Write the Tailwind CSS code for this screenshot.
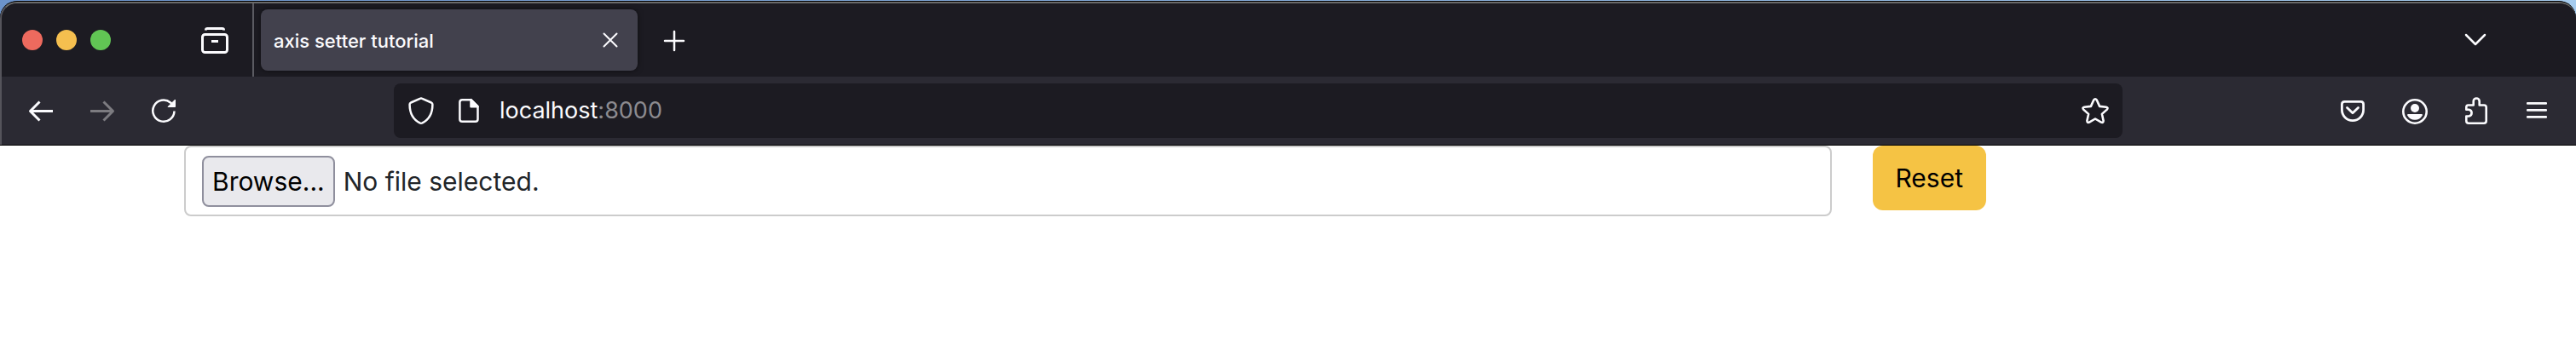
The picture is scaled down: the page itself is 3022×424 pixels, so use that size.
<!DOCTYPE html>
<html lang="en">
<head>
<meta charset="utf-8">
<title>axis setter tutorial</title>
<script src="https://cdn.jsdelivr.net/npm/@tailwindcss/browser@4"></script>
</head>
<body class="bg-white font-['Inter','Liberation_Sans',sans-serif]">
<header class="bg-linear-to-r from-[#6c93cb] to-[#a5cbee] pt-px">
  <div class="rounded-t-[20px] border-t border-b border-black bg-black">
    <div class="overflow-hidden rounded-t-[20px] border-t-2 border-l-2 border-t-[#6a6a6a] border-l-[#55545b] bg-[#2b2a33] text-[#fbfbfe]">
      <!-- Tab strip -->
      <div class="flex h-[86px] items-center bg-[#1c1b22]">
        <div class="flex gap-4 pl-6">
          <button aria-label="Close window" class="size-6 rounded-full bg-[#ed6a5e]"></button>
          <button aria-label="Minimize window" class="size-6 rounded-full bg-[#f5bf4f]"></button>
          <button aria-label="Zoom window" class="size-6 rounded-full bg-[#61c554]"></button>
        </div>
        <button aria-label="Firefox View" class="ml-[106px]">
          <svg class="size-8" viewBox="0 0 32 32" fill="none" stroke="currentColor" stroke-width="3"><path d="M5.500 4.500V4q0-1.500 2-1.500h17q2 0 2 1.500v.5"/><rect x="1.500" y="9.500" width="29" height="21" rx="3"/><path d="M12 17.500h8"/></svg>
        </button>
        <div class="ml-7 h-full w-0.5 bg-[#5b5b62]"></div>
        <div class="ml-2 flex h-[72px] w-[442px] items-center justify-between rounded-lg bg-[#42414d] pr-5 pl-[15px] shadow-[0_0_6px_rgba(0,0,0,0.5)]">
          <span class="pt-0.5 text-[22px] font-medium">axis setter tutorial</span>
          <button aria-label="Close tab"><svg class="size-6" viewBox="0 0 24 24" fill="none" stroke="currentColor" stroke-width="2" stroke-linecap="round"><path d="M4.500 4.500l15 15M19.500 4.500l-15 15"/></svg></button>
        </div>
        <button aria-label="New tab" class="ml-[27px]"><svg class="size-8" viewBox="0 0 32 32" fill="none" stroke="currentColor" stroke-width="2.500" stroke-linecap="round"><path d="M16 6v22M5 17h22"/></svg></button>
        <button aria-label="List all tabs" class="mr-[102px] ml-auto"><svg class="size-8" viewBox="0 0 32 32" fill="none" stroke="currentColor" stroke-width="2.500" stroke-linecap="round" stroke-linejoin="round"><path d="M5 10l11 11 11-11"/></svg></button>
      </div>
      <!-- Navigation toolbar -->
      <div class="flex h-20 items-center pr-[30px] pl-[30px]">
        <div class="flex gap-10">
          <button aria-label="Back"><svg class="size-8" viewBox="0 0 32 32" fill="none" stroke="currentColor" stroke-width="3" stroke-linejoin="round"><path d="M30 16.500H4M14.500 5.500l-11 11 11 11"/></svg></button>
          <button aria-label="Forward" disabled class="text-[#7c7b80]"><svg class="size-8" viewBox="0 0 32 32" fill="none" stroke="currentColor" stroke-width="3" stroke-linejoin="round"><path d="M2 16.500h26M17.500 5.500l11 11-11 11"/></svg></button>
          <button aria-label="Reload"><svg class="size-8" viewBox="0 0 32 32" fill="none" stroke="currentColor" stroke-width="2.500"><path d="M28.500 16.500A12.600 12.600 0 1 1 24 6.500l1.500 1.300"/><path d="M29.500 3v8.500H21z" fill="currentColor" stroke-width="1" stroke-linejoin="round"/></svg></button>
        </div>
        <div class="mx-[254px] flex h-16 flex-1 items-center rounded-lg bg-[#1c1b22] px-4">
          <button aria-label="Tracking protection"><svg class="size-8" viewBox="0 0 32 32" fill="none" stroke="currentColor" stroke-width="2.500" stroke-linejoin="round"><path d="M15.200 1.700q.8-.4 1.600 0L28 6.500q1.400.7 1.400 2.200C29.400 19 25 26.500 17.500 30.300q-1.500.7-3 0C7 26.500 2.600 19 2.600 8.700q0-1.500 1.400-2.200z"/></svg></button>
          <button aria-label="Site information" class="ml-6"><svg class="size-8" viewBox="0 0 32 32" fill="none" stroke="currentColor" stroke-width="2.500" stroke-linejoin="round"><path d="M8.200 3.200h10.300l8 8V26q0 2.800-2.800 2.800H8.200q-2.800 0-2.800-2.800V6q0-2.800 2.800-2.800z"/><path d="M18.500 3.200v8h8z" fill="currentColor"/></svg></button>
          <span class="ml-5 text-[27px]">localhost<span class="text-[#8c8b90]">:8000</span></span>
          <button aria-label="Bookmark this page" class="ml-auto"><svg class="size-8" viewBox="0 0 32 32" fill="none" stroke="currentColor" stroke-width="2.600" stroke-linejoin="round"><path d="M14.200 3.500Q16 .9 17.800 3.500l3.300 7.400 7.700.8q2.800.7 1 2.900l-5.900 5.300 1.700 7.900q0 2.800-2.600 1.800l-7-4.100-7 4.100q-2.600 1-2.600-1.800l1.700-7.900-5.900-5.300q-1.800-2.200 1-2.900l7.700-.8z"/></svg></button>
        </div>
        <div class="flex gap-10">
          <button aria-label="Save to Pocket"><svg class="size-8" viewBox="0 0 32 32" fill="none" stroke="currentColor" stroke-width="2.800" stroke-linejoin="round" stroke-linecap="round"><path d="M6.500 5.400h19q3.100 0 3.100 3.100v6.500a12.600 12.600 0 0 1-25.200 0V8.500q0-3.100 3.100-3.100z"/><path d="M9.500 12.500l6.500 6.300 6.500-6.300"/></svg></button>
          <button aria-label="Account"><svg class="size-8" viewBox="0 0 32 32" fill="none"><circle cx="17" cy="17" r="13.700" stroke="currentColor" stroke-width="2.600"/><circle cx="17" cy="13" r="5" fill="currentColor"/><path d="M9 20h16q1.500 0 .8 1.500a10 10 0 0 1-17.600 0Q7.500 20 9 20z" fill="currentColor"/></svg></button>
          <button aria-label="Extensions"><svg class="size-8" viewBox="0 0 32 32" fill="none" stroke="currentColor" stroke-width="2.600" stroke-linejoin="round"><path d="M7.500 9.500h6.200V5a3.500 3.500 0 0 1 7 0v4.500H26q2.700 0 2.700 2.500v16q0 2.700-2.700 2.700H8q-2.700 0-2.700-2.700v-5.500h3.200a4 4 0 0 0 0-7.800H5.300V12q0-2.500 2.200-2.500z"/></svg></button>
          <button aria-label="Open application menu"><svg class="size-8" viewBox="0 0 32 32" fill="none" stroke="currentColor" stroke-width="2.600" stroke-linecap="round"><path d="M5.200 7.400h21.600M5.200 15.400h21.600M5.200 23.400h21.600"/></svg></button>
        </div>
      </div>
    </div>
  </div>
</header>
<main class="flex items-start gap-12 pr-[692px] pl-[216px] text-[30px] leading-[48px]">
  <label class="relative flex flex-1 items-center rounded-lg border-2 border-[#cccccc] px-[19px] pt-2.5 pb-[9px] text-[#212529]">
    <input type="file" class="sr-only">
    <span class="rounded-lg border-2 border-[#8f8f9d] bg-[#e9e9ed] px-2.5 py-1 text-black">Browse...</span>
    <span class="ml-2.5">No file selected.</span>
  </label>
  <button type="reset" class="rounded-xl bg-[#f5c344] px-[27px] py-3.5 text-black">Reset</button>
</main>
</body>
</html>
